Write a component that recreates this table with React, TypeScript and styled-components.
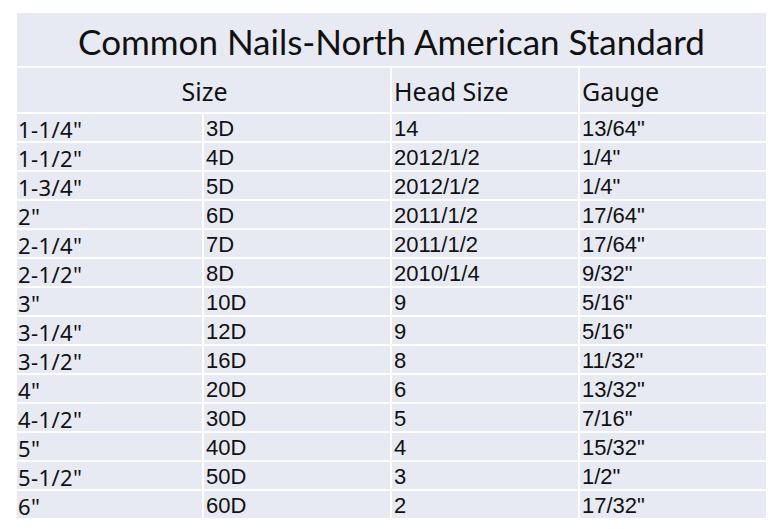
import React from "react";
import styled, { createGlobalStyle } from "styled-components";

const GlobalStyle = createGlobalStyle`
    html, body {
        margin: 0;
        padding: 0;
        background: #fff;
    }
`;

const rows: [string, string, string, string][] = [
    ['1-1/4"', "3D", "14", '13/64"'],
    ['1-1/2"', "4D", "2012/1/2", '1/4"'],
    ['1-3/4"', "5D", "2012/1/2", '1/4"'],
    ['2"', "6D", "2011/1/2", '17/64"'],
    ['2-1/4"', "7D", "2011/1/2", '17/64"'],
    ['2-1/2"', "8D", "2010/1/4", '9/32"'],
    ['3"', "10D", "9", '5/16"'],
    ['3-1/4"', "12D", "9", '5/16"'],
    ['3-1/2"', "16D", "8", '11/32"'],
    ['4"', "20D", "6", '13/32"'],
    ['4-1/2"', "30D", "5", '7/16"'],
    ['5"', "40D", "4", '15/32"'],
    ['5-1/2"', "50D", "3", '1/2"'],
    ['6"', "60D", "2", '17/32"'],
];

export default function App() {
    return (
        <>
            <GlobalStyle />
            <Page>
                <Table>
                    <Title>Common Nails-North American Standard</Title>
                    <HeadCell $span={2} $center>Size</HeadCell>
                    <HeadCell>Head Size</HeadCell>
                    <HeadCell>Gauge</HeadCell>
                    {rows.map((r, i) => (
                        <React.Fragment key={i}>
                            <Cell $yahei>{r[0]}</Cell>
                            <Cell>{r[1]}</Cell>
                            <Cell>{r[2]}</Cell>
                            <Cell>{r[3]}</Cell>
                        </React.Fragment>
                    ))}
                </Table>
            </Page>
        </>
    );
}

const Page = styled.div`
    width: 776px;
    height: 529px;
    padding: 13px 0 0 17px;
    box-sizing: border-box;
`;

const Table = styled.div`
    width: 749px;
    display: grid;
    grid-template-columns: 185px 186px 186px 186px;
    grid-template-rows: 53px 44px repeat(14, 27px);
    gap: 2px;
    color: #111;
`;

const Title = styled.div`
    grid-column: 1 / span 4;
    background: #e8eaf3;
    display: flex;
    align-items: center;
    justify-content: center;
    font-family: Lato, "Noto Sans", sans-serif;
    font-size: 35px;
    line-height: 1;
    padding-top: 3px;
`;

const HeadCell = styled.div<{ $span?: number; $center?: boolean }>`
    grid-column: span ${(p) => p.$span ?? 1};
    background: #e8eaf3;
    display: flex;
    align-items: center;
    justify-content: ${(p) => (p.$center ? "center" : "flex-start")};
    padding: 2px 0 0 2px;
    font-family: "Noto Sans", "Open Sans", sans-serif;
    font-size: 25px;
    line-height: 1;
`;

const Cell = styled.div<{ $yahei?: boolean }>`
    background: #e8eaf3;
    display: flex;
    align-items: center;
    padding: ${(p) => (p.$yahei ? "3px 0 0 1px" : "3px 0 0 2px")};
    font-family: ${(p) =>
        p.$yahei ? `"Noto Sans", "Open Sans", sans-serif` : `"Liberation Sans", Arial, sans-serif`};
    font-size: 22px;
    line-height: 1;
    letter-spacing: ${(p) => (p.$yahei ? "0.4px" : "0")};
    white-space: nowrap;
`;
